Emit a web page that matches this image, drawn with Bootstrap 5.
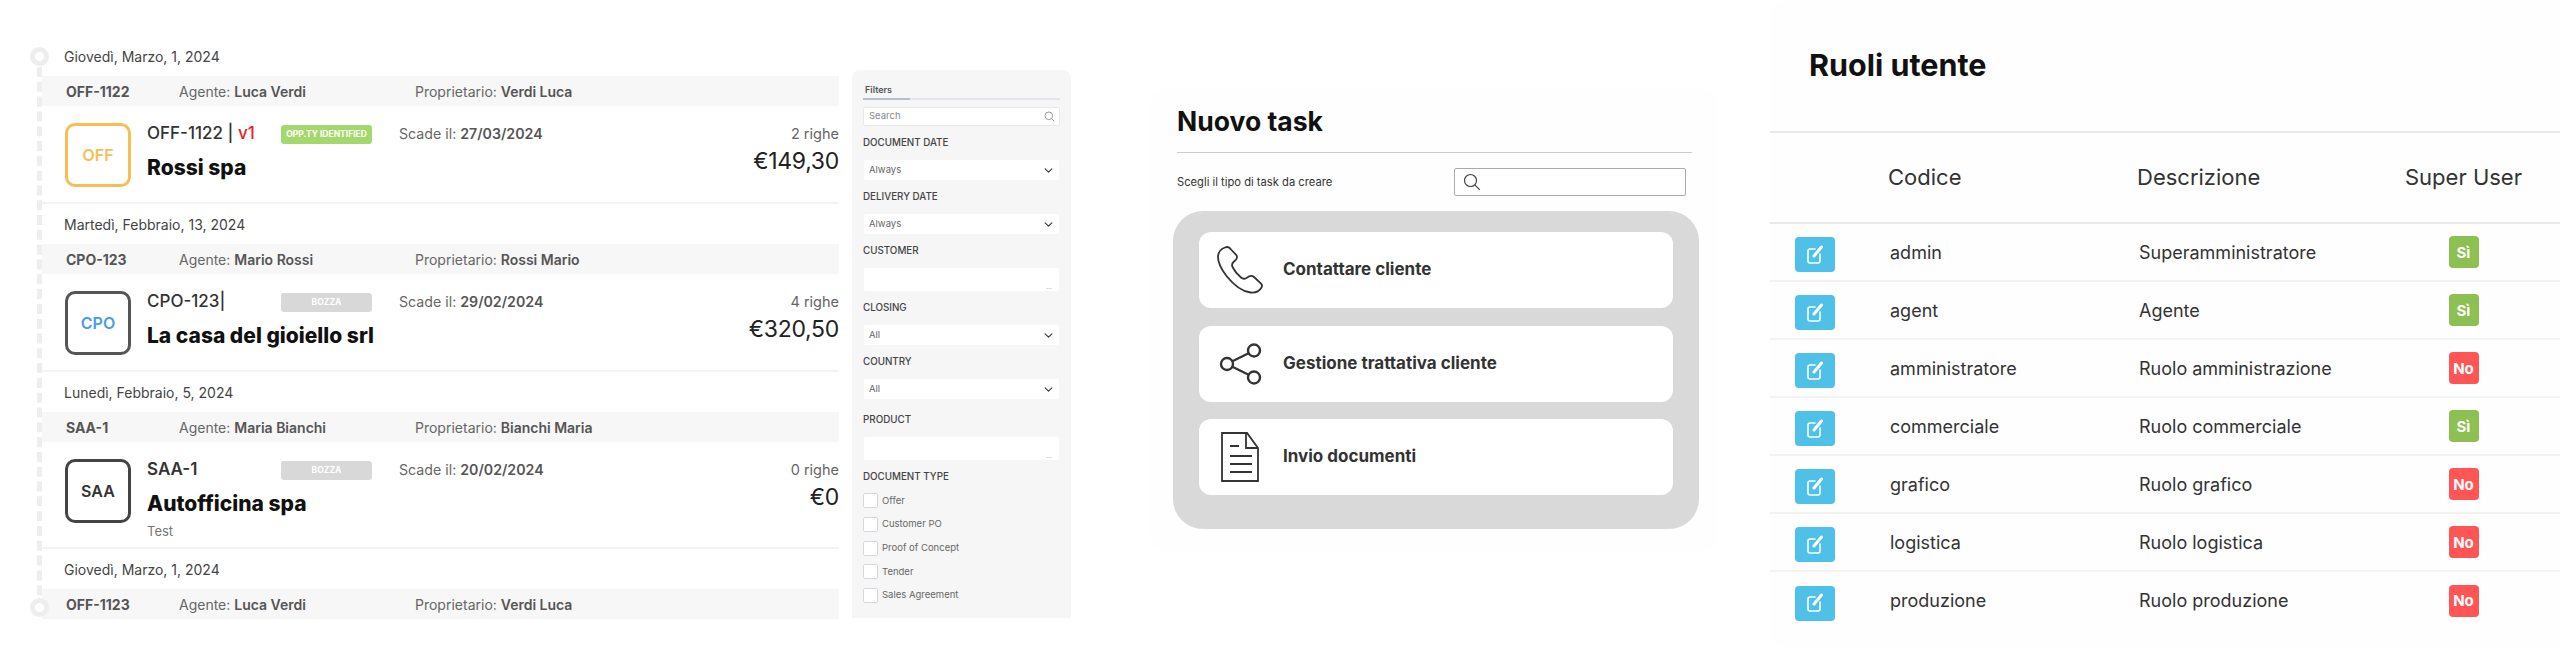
<!DOCTYPE html>
<html lang="it">
<head>
    <meta charset="UTF-8" />
    <meta name="viewport" content="width=device-width, initial-scale=1" />
    <title>Schermate gestionale</title>
    <link href="https://cdn.jsdelivr.net/npm/bootstrap@5.3.3/dist/css/bootstrap.min.css" rel="stylesheet">
    <style>
        body { width: 2560px; height: 655px; overflow: hidden; background: #fff; font-family: Inter, "Liberation Sans", sans-serif; color: #333; }

        /* TIMELINE */
        .timeline { width: 802px; height: 575px; margin: 43px 0 0 37px; padding-left: 5px; }
        .timeline::before { content: ""; position: absolute; left: 0; top: 24px; bottom: 8px; border-left: 5px dashed #eeeeee; }
        .pallino { position: absolute; left: -7px; width: 19px; height: 19px; border: 5px solid #eeeeee; border-radius: 50%; background: #fff; }
        .pallino-alto { top: 4px; }
        .pallino-basso { bottom: 1px; }
        .data-giorno { height: 28px; line-height: 28px; margin: 0 0 5px 22px; font-size: 14px; color: #444; }
        .barra-doc { height: 30px; padding-left: 24px; background: #f7f7f7; font-size: 14px; color: #666; }
        .barra-doc b { font-weight: 600; color: #555; }
        .barra-codice { width: 113px; font-weight: 700; color: #555; }
        .barra-agente { width: 236px; }
        .riga-doc { height: 98px; margin-bottom: 7px; padding: 17px 0 0 23px; border-bottom: 2px solid #f3f3f3; }
        .riga-alta { height: 107px; }
        .logo-doc { width: 66px; height: 64px; flex: none; margin-right: 16px; border: 3px solid #555; border-radius: 10px; font-size: 16px; font-weight: 600; }
        .logo-off { border-color: #f8bd55; color: #f8bd55; }
        .logo-cpo { color: #4a9be8; }
        .logo-saa { border-color: #444; color: #333; }
        .doc-testa { height: 22px; }
        .doc-codice { width: 134px; font-size: 17px; font-weight: 500; color: #333; white-space: nowrap; }
        .doc-versione { color: #e8202a; }
        .stato-doc { width: 91px; height: 19px; margin-right: 27px; border-radius: 3px; font-size: 8.5px; font-weight: 700; color: #fff; }
        .stato-verde { background: #a5d86c; }
        .stato-grigio { background: #d8d8d8; }
        .doc-scade { font-size: 14.2px; color: #666; white-space: nowrap; }
        .doc-scade b { font-weight: 600; color: #555; }
        .doc-cliente { margin-top: 8px; font-size: 21px; line-height: 30px; font-weight: 800; color: #111; }
        .doc-nota { margin-top: 2px; font-size: 13px; line-height: 20px; color: #777; }
        .doc-righe { font-size: 14.5px; line-height: 22px; color: #666; }
        .doc-totale { font-size: 23px; line-height: 32px; letter-spacing: -.3px; color: #222; }

        /* FILTRI */
        .filtri { width: 219px; height: 548px; margin: 70px 0 0 13px; padding: 13px 11px 0; overflow: hidden; background: #f6f6f6; border-radius: 8px 8px 0 0; font-size: 9.5px; color: #666; }
        .filtri-tab { height: 17px; padding-left: 2px; border-bottom: 2px solid #e2e6ea; font-weight: 600; font-size: 9px; color: #555; position: relative; }
        .filtri-tab::after { content: ""; position: absolute; left: 0; bottom: -2px; width: 47px; height: 2px; background: #b5bfd0; }
        .filtri-cerca { height: 19px; margin-top: 7px; padding: 0 4px 0 5px; background: #fff; border: 1px solid #e8e8e8; border-radius: 2px; color: #888; }
        .filtri-etichetta { height: 14px; line-height: 14px; margin: 10px 0; font-size: 9.8px; font-weight: 500; color: #444; }
        .filtri-staccata { margin-top: 14px; }
        .filtri-ultima { margin-bottom: 5px; }
        .filtri .form-select { height: 20px; width: 195px; margin-left: 1px; padding: 0 5px; border: 0; border-radius: 2px; font-size: 9.5px; line-height: 20px; color: #666; background-size: 9px 9px; background-position: right 6px center; }
        .filtri-vuoto { height: 23px; width: 195px; margin-left: 1px; padding: 0 7px 1px 0; background: #fff; border-radius: 2px; font-size: 7px; line-height: 1; color: #aaa; }
        .filtri-spunta { height: 23.7px; gap: 4px; }
        .filtri-spunta .form-check-input { width: 15px; height: 15px; margin: 0; border: 1px solid #d4d8de; border-radius: 2px; }

        /* NUOVO TASK */
        .pannello-task { width: 568px; height: 464px; margin: 88px 0 0 79px; padding: 13px 0 0 23px; background: #fefefe; border-radius: 20px; }
        .task-testa { width: 519px; padding-left: 4px; }
        .task-titolo { margin: 0; padding-bottom: 11px; border-bottom: 1px solid #ccc; font-size: 26.5px; line-height: 40px; font-weight: 700; color: #111; }
        .task-scelta { margin-top: 15px; padding-right: 6px; font-size: 11.2px; color: #333; }
        .task-cerca { width: 232px; height: 28px; padding-left: 8px; background: #fff; border: 1px solid #aaa; border-radius: 2px; }
        .task-gruppo { width: 526px; margin-top: 15px; padding: 21px 26px 34px 26px; gap: 17.5px; background: #d9d9d9; border-radius: 30px; }
        .task-voce { height: 76px; padding-left: 17px; gap: 19px; background: #fff; border-radius: 12px; font-size: 17px; font-weight: 700; color: #333; }
        .task-icona { width: 48px; flex: none; }

        /* RUOLI */
        .pannello-ruoli { width: 790px; height: 647px; margin-left: 52px; background: #fefefe; border-radius: 20px 0 0 20px; }
        .ruoli-titolo { height: 133px; margin: 0; padding: 44px 0 0 39px; border-bottom: 2px solid #e6e9ed; font-size: 30.5px; line-height: 42px; font-weight: 700; color: #111; }
        .tabella-ruoli { table-layout: fixed; margin: 0; --bs-table-bg: transparent; color: #333; }
        .tabella-ruoli th { height: 90px; padding: 0; vertical-align: middle; font-size: 22px; font-weight: 400; color: #333; border-bottom: 2px solid #e6e9ed; }
        .tabella-ruoli td { height: 58px; padding: 0 0 0 2px; vertical-align: middle; font-size: 18px; color: #333; border-bottom: 2px solid #f2f2f2; }
        .tabella-ruoli tbody tr:last-child td { border-bottom: 0; }
        .tabella-ruoli td.cella-azione { padding-left: 25px; }
        .tabella-ruoli td.cella-super, .tabella-ruoli th.cella-super { padding: 0 13px 0 0; text-align: center; }
        .btn-modifica { width: 40px; height: 35px; margin-top: 5px; padding: 0; background: #4fc1e9; border: 0; border-radius: 4px; }
        .spia-ruolo { width: 30px; height: 32px; padding: 0; border-radius: 4px; font-size: 15px; font-weight: 700; }
        .spia-si { background: #8cc152; }
        .spia-no { background: #ff5555; }
    </style>
</head>
<body class="d-flex align-items-start">

    <!-- TIMELINE DOCUMENTI -->
    <section class="timeline position-relative flex-shrink-0">
        <span class="pallino pallino-alto"></span>
        <span class="pallino pallino-basso"></span>

        <div class="data-giorno">Giovedì, Marzo, 1, 2024</div>
        <div class="barra-doc d-flex align-items-center">
            <span class="barra-codice">OFF-1122</span>
            <span class="barra-agente">Agente: <b>Luca Verdi</b></span>
            <span>Proprietario: <b>Verdi Luca</b></span>
        </div>
        <div class="riga-doc d-flex">
            <div class="logo-doc logo-off d-flex align-items-center justify-content-center">OFF</div>
            <div>
                <div class="doc-testa d-flex align-items-center">
                    <span class="doc-codice">OFF-1122 | <span class="doc-versione">v1</span></span>
                    <span class="stato-doc stato-verde d-flex align-items-center justify-content-center">OPP.TY IDENTIFIED</span>
                    <span class="doc-scade">Scade il: <b>27/03/2024</b></span>
                </div>
                <div class="doc-cliente">Rossi spa</div>
            </div>
            <div class="ms-auto text-end">
                <div class="doc-righe">2 righe</div>
                <div class="doc-totale">€149,30</div>
            </div>
        </div>

        <div class="data-giorno">Martedì, Febbraio, 13, 2024</div>
        <div class="barra-doc d-flex align-items-center">
            <span class="barra-codice">CPO-123</span>
            <span class="barra-agente">Agente: <b>Mario Rossi</b></span>
            <span>Proprietario: <b>Rossi Mario</b></span>
        </div>
        <div class="riga-doc d-flex">
            <div class="logo-doc logo-cpo d-flex align-items-center justify-content-center">CPO</div>
            <div>
                <div class="doc-testa d-flex align-items-center">
                    <span class="doc-codice">CPO-123|</span>
                    <span class="stato-doc stato-grigio d-flex align-items-center justify-content-center">BOZZA</span>
                    <span class="doc-scade">Scade il: <b>29/02/2024</b></span>
                </div>
                <div class="doc-cliente">La casa del gioiello srl</div>
            </div>
            <div class="ms-auto text-end">
                <div class="doc-righe">4 righe</div>
                <div class="doc-totale">€320,50</div>
            </div>
        </div>

        <div class="data-giorno">Lunedì, Febbraio, 5, 2024</div>
        <div class="barra-doc d-flex align-items-center">
            <span class="barra-codice">SAA-1</span>
            <span class="barra-agente">Agente: <b>Maria Bianchi</b></span>
            <span>Proprietario: <b>Bianchi Maria</b></span>
        </div>
        <div class="riga-doc riga-alta d-flex">
            <div class="logo-doc logo-saa d-flex align-items-center justify-content-center">SAA</div>
            <div>
                <div class="doc-testa d-flex align-items-center">
                    <span class="doc-codice fw-semibold">SAA-1</span>
                    <span class="stato-doc stato-grigio d-flex align-items-center justify-content-center">BOZZA</span>
                    <span class="doc-scade">Scade il: <b>20/02/2024</b></span>
                </div>
                <div class="doc-cliente">Autofficina spa</div>
                <div class="doc-nota">Test</div>
            </div>
            <div class="ms-auto text-end">
                <div class="doc-righe">0 righe</div>
                <div class="doc-totale">€0</div>
            </div>
        </div>

        <div class="data-giorno">Giovedì, Marzo, 1, 2024</div>
        <div class="barra-doc d-flex align-items-center">
            <span class="barra-codice">OFF-1123</span>
            <span class="barra-agente">Agente: <b>Luca Verdi</b></span>
            <span>Proprietario: <b>Verdi Luca</b></span>
        </div>
    </section>

    <!-- FILTRI -->
    <aside class="filtri flex-shrink-0">
        <div class="filtri-tab">Filters</div>
        <div class="filtri-cerca d-flex align-items-center justify-content-between">
            <span>Search</span>
            <svg width="11" height="11" viewBox="0 0 11 11" fill="none" stroke="#999" stroke-width="1"><circle cx="4.8" cy="4.8" r="3.8"/><path d="M7.6 7.6l2.6 2.6"/></svg>
        </div>
        <div class="filtri-etichetta">DOCUMENT DATE</div>
        <select class="form-select"><option>Always</option></select>
        <div class="filtri-etichetta">DELIVERY DATE</div>
        <select class="form-select"><option>Always</option></select>
        <div class="filtri-etichetta">CUSTOMER</div>
        <div class="filtri-vuoto d-flex align-items-end justify-content-end">...</div>
        <div class="filtri-etichetta">CLOSING</div>
        <select class="form-select"><option>All</option></select>
        <div class="filtri-etichetta">COUNTRY</div>
        <select class="form-select"><option>All</option></select>
        <div class="filtri-etichetta filtri-staccata">PRODUCT</div>
        <div class="filtri-vuoto d-flex align-items-end justify-content-end">...</div>
        <div class="filtri-etichetta filtri-ultima">DOCUMENT TYPE</div>
        <div class="filtri-spunta d-flex align-items-center"><input class="form-check-input" type="checkbox"><span>Offer</span></div>
        <div class="filtri-spunta d-flex align-items-center"><input class="form-check-input" type="checkbox"><span>Customer PO</span></div>
        <div class="filtri-spunta d-flex align-items-center"><input class="form-check-input" type="checkbox"><span>Proof of Concept</span></div>
        <div class="filtri-spunta d-flex align-items-center"><input class="form-check-input" type="checkbox"><span>Tender</span></div>
        <div class="filtri-spunta d-flex align-items-center"><input class="form-check-input" type="checkbox"><span>Sales Agreement</span></div>
    </aside>

    <!-- NUOVO TASK -->
    <section class="pannello-task flex-shrink-0">
        <div class="task-testa">
            <h2 class="task-titolo">Nuovo task</h2>
            <div class="task-scelta d-flex align-items-center justify-content-between">
                <span>Scegli il tipo di task da creare</span>
                <div class="task-cerca d-flex align-items-center">
                    <svg width="18" height="18" viewBox="0 0 18 18" fill="none" stroke="#444" stroke-width="1.2"><circle cx="7.5" cy="7.5" r="6"/><path d="M11.8 11.8l5 5"/></svg>
                </div>
            </div>
        </div>
        <div class="task-gruppo d-flex flex-column">
            <div class="task-voce d-flex align-items-center">
                <div class="task-icona d-flex justify-content-center">
                    <svg width="48" height="48" viewBox="0 0 48 48" fill="none" stroke="#333" stroke-width="1.8" stroke-linejoin="round"><path d="M9 1.5C5 3 2 6.5 2 11c0 6 3.500 12.500 8.500 19 6 7.500 15 15.500 24 16.500 4.500.5 9-1.500 11-5 1-1.500.5-3-.7-4.200l-6.800-6.300c-1.500-1.300-3.500-1.500-5.200-.5l-2.300 1.500c-1.800 1-4 .8-5.500-.5-3.500-3-6.500-6.500-8.500-10.500-.8-1.800-.3-3.800 1-5l2-1.800c1.500-1.300 1.800-3.300.9-5L15 3.500C13.500 1 11.500.5 9 1.500z"/></svg>
                </div>
                <span>Contattare cliente</span>
            </div>
            <div class="task-voce d-flex align-items-center">
                <div class="task-icona d-flex justify-content-center">
                    <svg width="48" height="44" viewBox="0 0 48 44" fill="none" stroke="#333" stroke-width="2.4"><circle cx="11" cy="22" r="6"/><circle cx="38" cy="8.5" r="6"/><circle cx="38" cy="35.5" r="6"/><path d="M16.4 19.3l16.2-8.1M16.4 24.7l16.2 8.1"/></svg>
                </div>
                <span>Gestione trattativa cliente</span>
            </div>
            <div class="task-voce d-flex align-items-center">
                <div class="task-icona d-flex justify-content-center">
                    <svg width="40" height="52" viewBox="0 0 40 52" fill="none" stroke="#333" stroke-width="1.8"><path d="M2 2h25l11 15v33H2z"/><path d="M26 2v15h12"/><path d="M10 15h9M10 25h22M10 33h22M10 41h22"/></svg>
                </div>
                <span>Invio documenti</span>
            </div>
        </div>
    </section>

    <!-- RUOLI UTENTE -->
    <section class="pannello-ruoli flex-shrink-0">
        <h2 class="ruoli-titolo">Ruoli utente</h2>
        <table class="table tabella-ruoli">
            <colgroup>
                <col width="118"><col width="249"><col width="243"><col width="180">
            </colgroup>
            <thead>
                <tr><th></th><th>Codice</th><th>Descrizione</th><th class="cella-super">Super User</th></tr>
            </thead>
            <tbody id="righe-ruoli"></tbody>
        </table>
    </section>

    <script>
        // DATI RUOLI
        const ruoli = [
            ["admin", "Superamministratore", true],
            ["agent", "Agente", true],
            ["amministratore", "Ruolo amministrazione", false],
            ["commerciale", "Ruolo commerciale", true],
            ["grafico", "Ruolo grafico", false],
            ["logistica", "Ruolo logistica", false],
            ["produzione", "Ruolo produzione", false]
        ];
        const iconaModifica = `<svg width="20" height="20" viewBox="0 0 20 20" fill="none" stroke="#fff" stroke-width="1.6" stroke-linecap="round"><path d="M10 4H5a2 2 0 0 0-2 2v10a2 2 0 0 0 2 2h8a2 2 0 0 0 2-2V9"/><path d="M9 11l7.5-9" stroke-width="3"/></svg>`;
        document.getElementById("righe-ruoli").innerHTML = ruoli.map(r => `
            <tr>
                <td class="cella-azione"><button class="btn btn-modifica d-inline-flex align-items-center justify-content-center">${iconaModifica}</button></td>
                <td>${r[0]}</td>
                <td>${r[1]}</td>
                <td class="cella-super"><span class="badge spia-ruolo d-inline-flex align-items-center justify-content-center ${r[2] ? "spia-si" : "spia-no"}">${r[2] ? "Sì" : "No"}</span></td>
            </tr>`).join("");
    </script>
    <script src="https://cdn.jsdelivr.net/npm/bootstrap@5.3.3/dist/js/bootstrap.bundle.min.js"></script>
</body>
</html>
